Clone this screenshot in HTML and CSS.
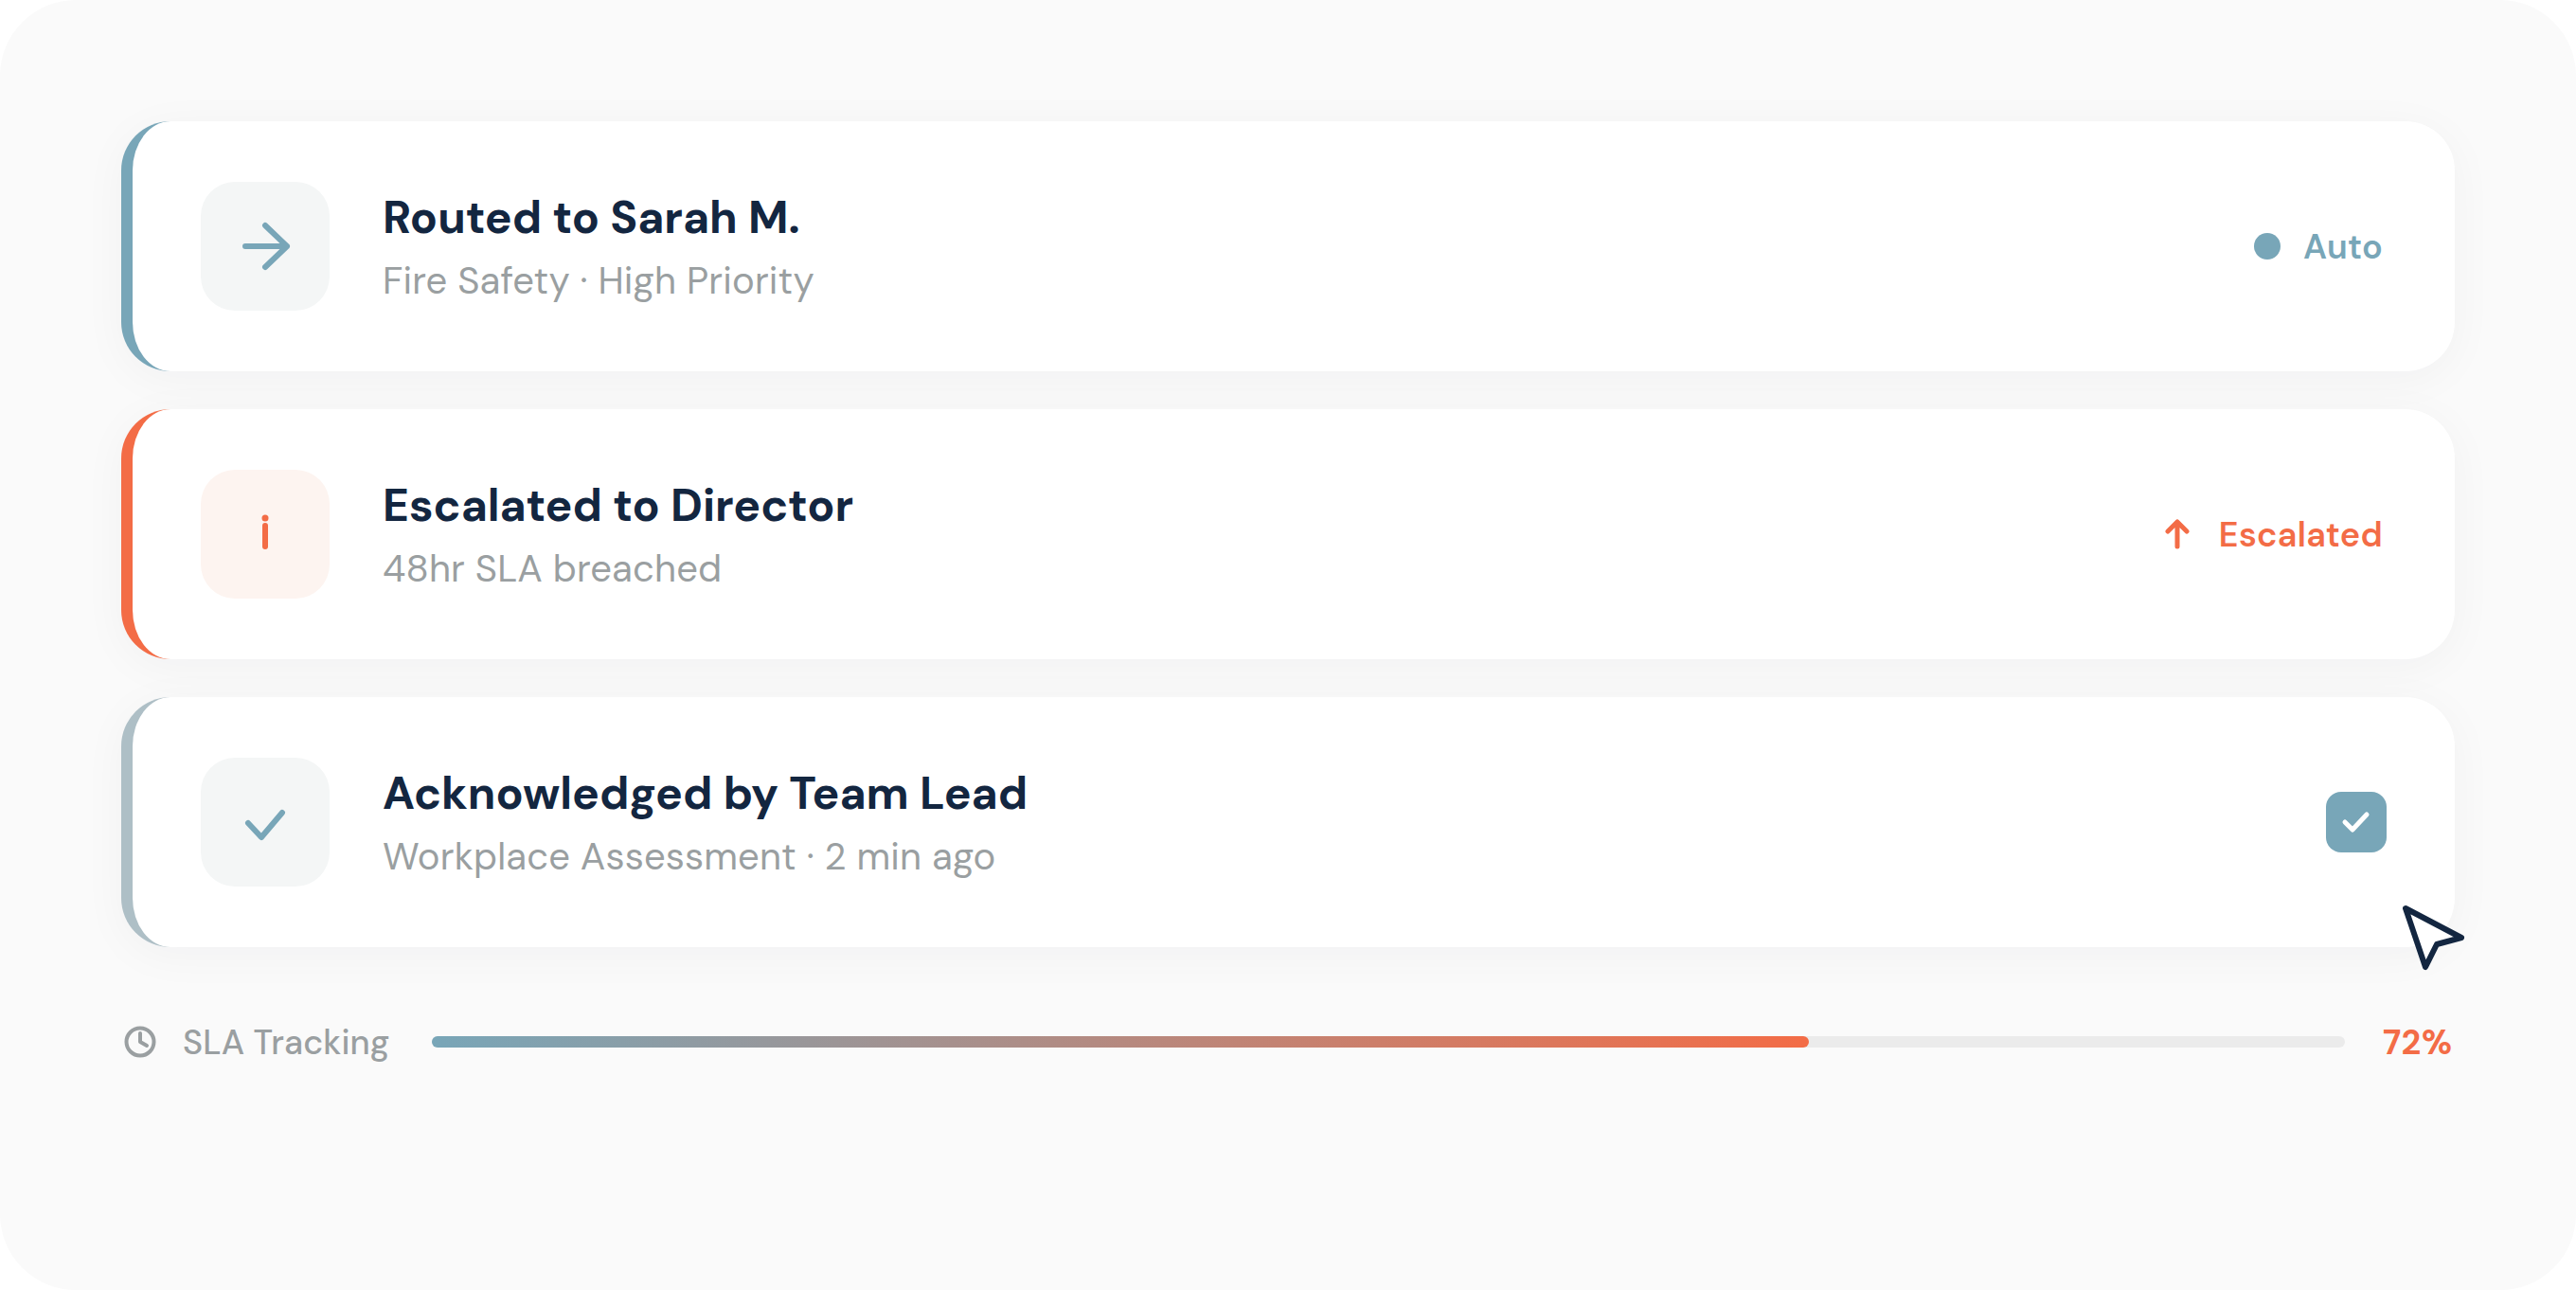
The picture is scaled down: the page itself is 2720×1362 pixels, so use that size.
FILE: index.html
```html
<!DOCTYPE html>
<html>
  <head>
    <meta charset="utf-8">
    <title>Routing</title>
    <link rel="stylesheet" href="styles.css">
  </head>
  <body>
    <main class="panel">
      <div class="card card-teal">
        <div class="icon">
          <svg width="64" height="64" viewBox="0 0 64 64"><path d="M11 32H55M32 10L55 32L32 54"/></svg>
        </div>
        <div class="text">
          <div class="title">Routed to Sarah M.</div>
          <div class="sub">Fire Safety · High Priority</div>
        </div>
        <div class="status status-teal">
          <span class="dot"></span>
          <span>Auto</span>
        </div>
      </div>
      <div class="card card-orange">
        <div class="icon icon-orange">
          <svg width="64" height="64" viewBox="0 0 64 64"><circle class="solid" cx="32" cy="15" r="3.5"/><path d="M32 23V45"/></svg>
        </div>
        <div class="text">
          <div class="title">Escalated to Director</div>
          <div class="sub">48hr SLA breached</div>
        </div>
        <div class="status status-orange">
          <svg width="32" height="32" viewBox="0 0 32 32"><path d="M16 29V4M6 13L16 3L26 13"/></svg>
          <span>Escalated</span>
        </div>
      </div>
      <div class="card card-muted">
        <div class="icon">
          <svg width="64" height="64" viewBox="0 0 64 64"><path d="M14 33L28 48L50 22"/></svg>
        </div>
        <div class="text">
          <div class="title">Acknowledged by Team Lead</div>
          <div class="sub">Workplace Assessment · 2 min ago</div>
        </div>
        <div class="checkbox">
          <svg width="32" height="32" viewBox="0 0 32 32"><path d="M4 16L12 24L27 8"/></svg>
        </div>
        <svg class="cursor" width="80" height="80" viewBox="0 0 80 80"><path d="M9 9L68 40L42 47L30 71Z"/></svg>
      </div>
      <div class="sla">
        <svg class="clock" width="40" height="40" viewBox="0 0 40 40"><circle cx="20" cy="20" r="14.5"/><path d="M20 11V20L27 24"/></svg>
        <span class="sla-label">SLA Tracking</span>
        <div class="track"><div class="fill" style="width: 72%"></div></div>
        <span class="sla-value">72%</span>
      </div>
    </main>
  </body>
</html>
```

FILE: styles.css
```css
* {
  box-sizing: border-box;
}
html, body {
  margin: 0;
  background: #fff;
}
body {
  font-family: "DM Sans", Inter, "Liberation Sans", sans-serif;
}
.panel {
  width: 2720px;
  height: 1362px;
  padding: 128px;
  border-radius: 80px;
  background: #fafafa;
  display: flex;
  flex-direction: column;
  gap: 40px;
}
.card {
  position: relative;
  height: 264px;
  flex: none;
  display: flex;
  align-items: center;
  padding: 0 72px;
  border-left: 12px solid #78a6b8;
  border-radius: 52px;
  background: #fff;
  box-shadow: 0 8px 48px rgba(18, 38, 63, 0.04);
}
.card-orange { border-left-color: #f36c46; }
.card-muted { border-left-color: #aebfc6; }
.icon {
  width: 136px;
  height: 136px;
  flex: none;
  display: flex;
  align-items: center;
  justify-content: center;
  border-radius: 36px;
  background: #f4f6f6;
}
.icon svg path {
  fill: none;
  stroke: #78a6b8;
  stroke-width: 6;
  stroke-linecap: round;
  stroke-linejoin: round;
}
.icon-orange { background: #fdf4f0; }
.icon-orange svg path { stroke: #f36c46; }
.icon-orange .solid { fill: #f36c46; }
.text {
  margin-left: 56px;
  flex: 1;
  padding-top: 1px;
}
.title {
  font-size: 48px;
  line-height: 60px;
  font-weight: 700;
  color: #132640;
}
.sub {
  margin-top: 11px;
  font-size: 40px;
  line-height: 50px;
  letter-spacing: 0.15px;
  color: #9a9fa1;
}
.status {
  display: flex;
  align-items: center;
  gap: 24px;
  padding-right: 4px;
  font-size: 36px;
  font-weight: 600;
  letter-spacing: 0.3px;
}
.status-teal { color: #78a6b8; }
.status-orange {
  gap: 28px;
  color: #f36c46;
}
.status svg path {
  fill: none;
  stroke: #f36c46;
  stroke-width: 5;
  stroke-linecap: round;
  stroke-linejoin: round;
}
.dot {
  width: 28px;
  height: 28px;
  border-radius: 50%;
  background: #78a6b8;
}
.checkbox {
  width: 64px;
  height: 64px;
  display: flex;
  align-items: center;
  justify-content: center;
  border-radius: 16px;
  background: #78a6b8;
}
.checkbox path {
  fill: none;
  stroke: #fff;
  stroke-width: 5;
  stroke-linecap: round;
  stroke-linejoin: round;
}
.cursor {
  position: absolute;
  right: -19px;
  bottom: -30px;
}
.cursor path {
  fill: #fff;
  stroke: #132640;
  stroke-width: 6;
  stroke-linejoin: round;
}
.sla {
  display: flex;
  align-items: center;
  height: 40px;
  margin-top: 40px;
  color: #9a9fa1;
}
.clock {
  flex: none;
  margin-right: 25px;
}
.clock circle, .clock path {
  fill: none;
  stroke: #9a9fa1;
  stroke-width: 4;
  stroke-linecap: round;
  stroke-linejoin: round;
}
.sla-label {
  width: 217px;
  margin-right: 46px;
  font-size: 36px;
  font-weight: 500;
  letter-spacing: 0.1px;
  white-space: nowrap;
}
.track {
  flex: 1;
  height: 12px;
  border-radius: 6px;
  background: #ebebeb;
}
.fill {
  height: 100%;
  border-radius: 6px;
  background: linear-gradient(90deg, #78a6b8, #f36c46);
}
.sla-value {
  width: 76px;
  margin-left: 40px;
  font-size: 36px;
  font-weight: 700;
  letter-spacing: 0.5px;
  color: #f36c46;
}
```
